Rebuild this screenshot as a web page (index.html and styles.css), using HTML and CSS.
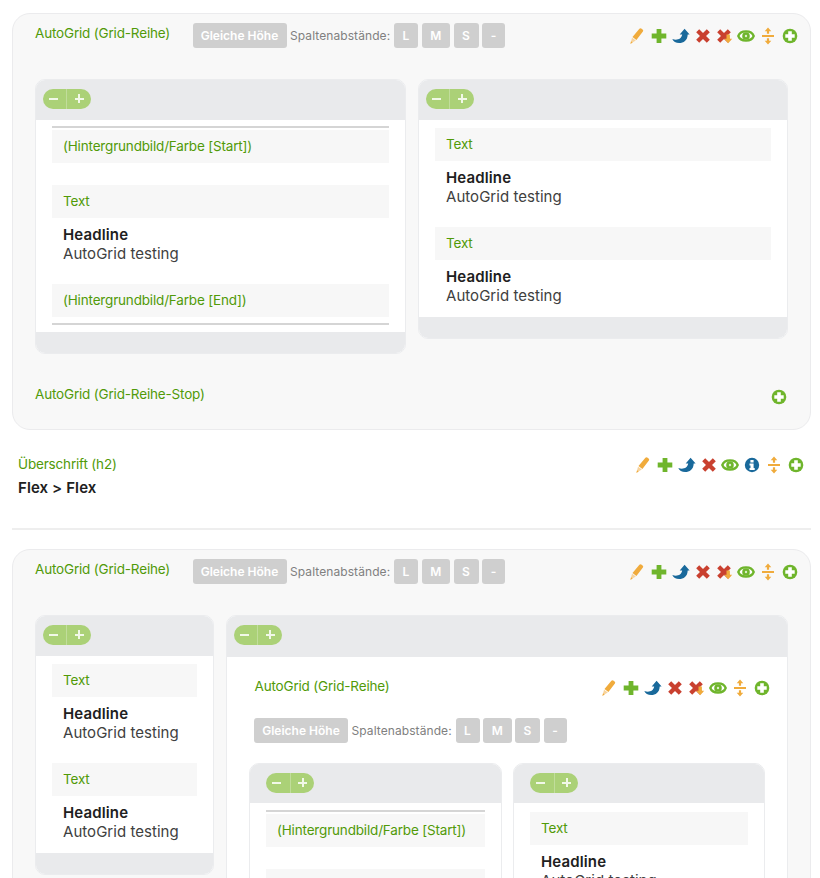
FILE: index.html
```
<!DOCTYPE html>
<html lang="de">
<head>
<meta charset="utf-8">
<title>AutoGrid</title>
<link rel="stylesheet" href="styles.css">
</head>
<body>
<svg class="sprite" aria-hidden="true">
  <symbol id="pencil" viewBox="0 0 18 18"><path fill="#f0ab3c" d="M11.400 1.700Q12.300 .6 13.700 1.700L14.600 2.400Q15.700 3.300 14.900 4.400L8.400 13L4.500 10.100Z"/><path fill="#f7d39c" d="M4 10.800L7.800 13.600L2.600 16.600Z"/><path fill="#f0ab3c" d="M3 14.200L4.700 15.500L2.400 16.900Z"/></symbol>
  <symbol id="plus" viewBox="0 0 18 18"><path fill="#6fb52c" d="M6.600 2h4.800v4.600H16.300v4.800H11.400V16H6.600V11.400H1.700V6.600H6.600Z"/></symbol>
  <symbol id="arrow" viewBox="0 0 18 18"><path fill="#19699b" d="M12.600 1.700L17.600 7.500H15.700C15.500 13.600 11.500 16 7.200 16C3.800 16 1.400 14.400.3 12C4.700 13.600 9.300 12.400 10.200 7.500H7.700Z"/></symbol>
  <symbol id="cross" viewBox="0 0 18 18"><path fill="none" stroke="#c9402f" stroke-width="4.300" d="M3.700 3.700L14.300 14.300M14.300 3.700L3.700 14.300"/></symbol>
  <symbol id="crossdown" viewBox="0 0 18 18"><path fill="none" stroke="#c9402f" stroke-width="4.300" d="M3.700 3.700L14.300 14.300M14.300 3.700L3.700 14.300"/><path fill="#f0ab3c" d="M11.500 7.500h3.400v4.300h2.300L13.200 16.200L9.200 11.800h2.300Z"/></symbol>
  <symbol id="eye" viewBox="0 0 18 18"><path fill="#fff" stroke="#6fb52c" stroke-width="2.300" d="M1.300 9C3.500 2.900 14.500 2.900 16.700 9C14.500 15.100 3.500 15.100 1.300 9Z"/><circle cx="9" cy="9" r="3.800" fill="#6fb52c"/><circle cx="9" cy="9" r="1.200" fill="#dcefc9"/></symbol>
  <symbol id="info" viewBox="0 0 18 18"><circle cx="9" cy="9" r="7.200" fill="#19699b"/><path fill="#fff" d="M7.400 4h3.200v2.500H7.400ZM6.500 7.600h4.100v4.500h1.100V14H6.500v-1.900h1V9.500h-1Z"/></symbol>
  <symbol id="split" viewBox="0 0 18 18"><path fill="#f0ab3c" d="M3 8h12v2H3ZM9 .4L12.300 4.200H10.100v2.600H7.900V4.200H5.700ZM9 17.600L5.700 13.800H7.900v-2.600h2.200V13.800h2.200Z"/></symbol>
  <symbol id="circleplus" viewBox="0 0 18 18"><circle cx="9" cy="9" r="7.300" fill="#6fb52c"/><path fill="#fff" d="M7.200 4.300h3.600v2.900h2.900v3.600h-2.900v2.900H7.200v-2.900H4.300V7.200h2.900Z"/></symbol>
</svg>
<main class="page">
  <section class="row-card first">
    <header class="row-head">
      <span class="label title">AutoGrid (Grid-Reihe)</span>
      <div class="options"><button class="btn wide">Gleiche Höhe</button><span class="caption">Spaltenabstände:</span><button class="btn l">L</button><button class="btn m">M</button><button class="btn s">S</button><button class="btn dash">-</button></div>
      <div class="tools"><svg><use href="#pencil"/></svg><svg><use href="#plus"/></svg><svg><use href="#arrow"/></svg><svg><use href="#cross"/></svg><svg><use href="#crossdown"/></svg><svg><use href="#eye"/></svg><svg><use href="#split"/></svg><svg><use href="#circleplus"/></svg></div>
    </header>
    <div class="columns halves">
      <article class="column">
        <div class="column-head"><span class="pill"><i class="minus"></i><i class="add"></i></span></div>
        <div class="column-body wrapped">
          <div class="item ruled"><div class="label bar">(Hintergrundbild/Farbe [Start])</div></div>
          <div class="item"><div class="label bar">Text</div><div class="content"><strong>Headline</strong><p>AutoGrid testing</p></div></div>
          <div class="item ruled-end"><div class="label bar">(Hintergrundbild/Farbe [End])</div></div>
        </div>
        <div class="column-foot"></div>
      </article>
      <article class="column">
        <div class="column-head"><span class="pill"><i class="minus"></i><i class="add"></i></span></div>
        <div class="column-body">
          <div class="item"><div class="label bar">Text</div><div class="content"><strong>Headline</strong><p>AutoGrid testing</p></div></div>
          <div class="item"><div class="label bar">Text</div><div class="content"><strong>Headline</strong><p>AutoGrid testing</p></div></div>
        </div>
        <div class="column-foot"></div>
      </article>
    </div>
    <footer class="row-stop"><span class="label">AutoGrid (Grid-Reihe-Stop)</span><div class="tools"><svg><use href="#circleplus"/></svg></div></footer>
  </section>

  <section class="heading-row">
    <div><span class="label">Überschrift (h2)</span><h2>Flex &gt; Flex</h2></div>
    <div class="tools"><svg><use href="#pencil"/></svg><svg><use href="#plus"/></svg><svg><use href="#arrow"/></svg><svg><use href="#cross"/></svg><svg><use href="#eye"/></svg><svg><use href="#info"/></svg><svg><use href="#split"/></svg><svg><use href="#circleplus"/></svg></div>
  </section>

  <section class="row-card second">
    <header class="row-head">
      <span class="label title">AutoGrid (Grid-Reihe)</span>
      <div class="options"><button class="btn wide">Gleiche Höhe</button><span class="caption">Spaltenabstände:</span><button class="btn l">L</button><button class="btn m">M</button><button class="btn s">S</button><button class="btn dash">-</button></div>
      <div class="tools"><svg><use href="#pencil"/></svg><svg><use href="#plus"/></svg><svg><use href="#arrow"/></svg><svg><use href="#cross"/></svg><svg><use href="#crossdown"/></svg><svg><use href="#eye"/></svg><svg><use href="#split"/></svg><svg><use href="#circleplus"/></svg></div>
    </header>
    <div class="columns sidebar">
      <article class="column">
        <div class="column-head"><span class="pill"><i class="minus"></i><i class="add"></i></span></div>
        <div class="column-body">
          <div class="item"><div class="label bar">Text</div><div class="content"><strong>Headline</strong><p>AutoGrid testing</p></div></div>
          <div class="item"><div class="label bar">Text</div><div class="content"><strong>Headline</strong><p>AutoGrid testing</p></div></div>
        </div>
        <div class="column-foot"></div>
      </article>
      <article class="column outer">
        <div class="column-head"><span class="pill"><i class="minus"></i><i class="add"></i></span></div>
        <div class="nested">
          <header class="nested-head"><span class="label">AutoGrid (Grid-Reihe)</span>
            <div class="tools"><svg><use href="#pencil"/></svg><svg><use href="#plus"/></svg><svg><use href="#arrow"/></svg><svg><use href="#cross"/></svg><svg><use href="#crossdown"/></svg><svg><use href="#eye"/></svg><svg><use href="#split"/></svg><svg><use href="#circleplus"/></svg></div>
          </header>
          <div class="options"><button class="btn wide">Gleiche Höhe</button><span class="caption">Spaltenabstände:</span><button class="btn l">L</button><button class="btn m">M</button><button class="btn s">S</button><button class="btn dash">-</button></div>
          <div class="columns halves inner">
            <article class="column">
              <div class="column-head"><span class="pill"><i class="minus"></i><i class="add"></i></span></div>
              <div class="column-body wrapped">
                <div class="item ruled"><div class="label bar">(Hintergrundbild/Farbe [Start])</div></div>
                <div class="item"><div class="label bar"></div></div>
              </div>
            </article>
            <article class="column">
              <div class="column-head"><span class="pill"><i class="minus"></i><i class="add"></i></span></div>
              <div class="column-body">
                <div class="item"><div class="label bar">Text</div><div class="content"><strong>Headline</strong><p>AutoGrid testing</p></div></div>
              </div>
            </article>
          </div>
        </div>
      </article>
    </div>
  </section>
</main>
</body>
</html>
```
FILE: styles.css
```
* { box-sizing: border-box; }
body {
  margin: 0;
  height: 878px;
  overflow: hidden;
  background: #fff;
  color: #404040;
  font: 15px/19px Inter, "Liberation Sans", sans-serif;
  letter-spacing: .04px;
}
p, h2 { margin: 0; }
.sprite { display: none; }
.page { height: 878px; overflow: hidden; padding: 13px 9px 0 12px; }

.row-card {
  border: 1px solid #ebebed;
  border-radius: 18px;
  background: #f8f8f8;
  padding: 0 22px;
}
.first { height: 417px; }
.second { height: 420px; }

.label { color: #519a08; font-size: 13.5px; line-height: 20px; letter-spacing: -.17px; white-space: nowrap; }

.row-head { display: flex; align-items: flex-start; height: 65px; padding-top: 9px; }
.row-head .title { width: 157.500px; margin-top: -.5px; }
.row-head .tools { margin: 4px -10.500px 0 auto; }

.options { display: flex; align-items: center; height: 25px; }
.btn {
  height: 25px;
  padding: 0;
  border: 0;
  border-radius: 3px;
  background: #cfcfcf;
  color: #fff;
  font: 600 12px/25px Inter, "Liberation Sans", sans-serif;
  white-space: nowrap;
}
.btn + .btn { margin-left: 3.500px; }
.wide { width: 94px; }
.l { width: 24px; }
.m { width: 28.500px; }
.s { width: 25px; }
.dash { width: 23px; }
.caption { width: 107.500px; padding-left: 3.500px; color: #808080; font-size: 12px; letter-spacing: .08px; white-space: nowrap; }

.tools { display: flex; gap: 3.750px; }
.tools svg { width: 18px; height: 18px; flex: none; }

.columns { display: grid; align-items: start; gap: 12px; }
.halves { grid-template-columns: 371px 370px; }
.sidebar { grid-template-columns: 179px 562px; }

.column { border: 1px solid #ebecee; border-radius: 10px; overflow: hidden; background: #fff; }
.column-head { height: 39.500px; padding: 8.500px 6.500px; background: #e9eaec; }
.pill { display: flex; width: 48px; height: 20px; border-radius: 10px; background: #abd177; overflow: hidden; }
.pill i { width: 23.500px; background: linear-gradient(#f1f8e8, #f1f8e8) 6px 9px / 9px 2px no-repeat; }
.pill .add {
  width: 24.500px;
  border-left: 1px solid #c1dd9b;
  background: linear-gradient(#f1f8e8, #f1f8e8) 7.500px 9px / 9px 2px no-repeat, linear-gradient(#f1f8e8, #f1f8e8) 11px 5.500px / 2px 9px no-repeat;
}
.column-body { padding: 8px 16px 0; }
.column-foot { height: 21px; background: #e9eaec; }

.item { height: 99px; }
.item:last-child { height: 90px; }
.bar { height: 33px; padding: 0 11px; line-height: 33px; background: #f7f7f7; }
.content { padding: 7px 11px 0; }
.content strong { display: block; color: #202020; font-weight: 600; letter-spacing: .14px; }
.wrapped { padding-top: 6px; }
.ruled { height: 59.500px; border-top: 2px solid #d5d5d5; padding-top: 2px; }
.item.ruled-end { height: 41px; border-bottom: 2px solid #d5d5d5; margin-bottom: 7px; }

.row-stop { display: flex; justify-content: space-between; padding-top: 30px; }
.row-stop .tools { padding-top: 4px; }

.heading-row {
  display: flex;
  justify-content: space-between;
  height: 100px;
  margin-bottom: 19px;
  padding: 24px 6px 0;
  border-bottom: 2px solid #eee;
}
.heading-row h2 { margin-top: 4px; color: #202020; font-size: 15px; line-height: 20px; font-weight: 600; letter-spacing: .1px; }
.heading-row .tools { padding-top: 2px; margin-right: .5px; }

.outer .column-head { height: 41px; }
.nested { padding: 19px 22px 0; }
.nested-head { display: flex; justify-content: space-between; height: 42px; padding-left: 5.500px; }
.nested-head .tools { margin: 3px -5.500px 0 0; }
.nested .options { padding-left: 5px; }
.inner { grid-template-columns: 253px 252px; gap: 11px; margin-top: 20px; }
.outer .inner .column-head { height: 39px; padding-left: 16px; }
.inner .column-body { padding-top: 9px; }
.inner .wrapped { padding-top: 7px; }
.inner .ruled { height: 59px; }
```
